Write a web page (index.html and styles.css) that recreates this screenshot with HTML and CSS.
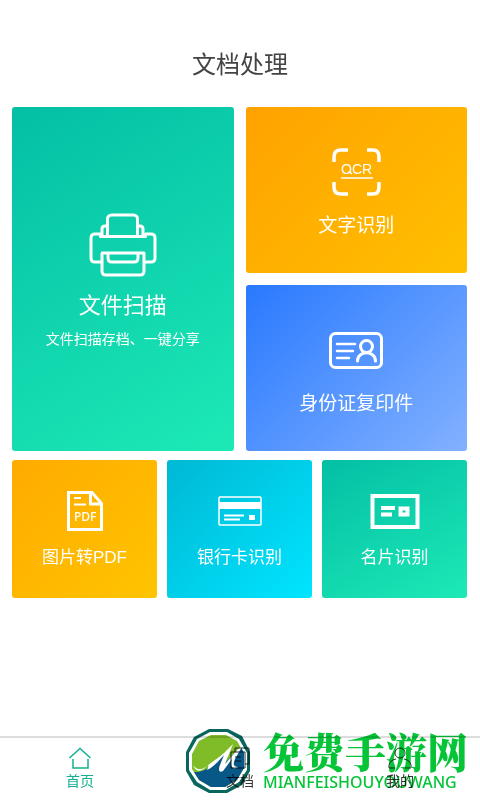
FILE: index.html
```html
<!DOCTYPE html>
<html lang="zh-CN">

<head>
    <meta charset="UTF-8" />
    <meta name="viewport" content="width=device-width, initial-scale=1.0" />
    <title>文档处理</title>
    <link rel="stylesheet" href="styles.css">
</head>

<body>
    <header class="header">
        <h1>文档处理</h1>
    </header>

    <main class="content">
        <div class="main-grid">
            <a href="#scan" class="card card-large green">
                <svg width="68" height="64" viewBox="0 0 68 64" fill="none" stroke="#fff" stroke-width="3" stroke-linejoin="round">
                    <path d="M18.500 23.500V6a4 4 0 0 1 4-4h22a4 4 0 0 1 4 4v17.500" />
                    <path d="M13 23.500V16q0-3 3-3h2M49 13h2q3 0 3 3v7.500" />
                    <path d="M12 49H6q-4 0-4-4V25q0-4 4-4h5.500v2.500h45V21H62q4 0 4 4v20q0 4-4 4h-6" />
                    <path d="M12 40h43v18q0 4-4 4H17q-4 0-4-4V40M19 41v4q0 4 4 4h22q4 0 4-4v-4" />
                </svg>
                <span class="card-title">文件扫描</span>
                <span class="card-desc">文件扫描存档、一键分享</span>
            </a>

            <a href="#ocr" class="card medium orange">
                <svg width="50" height="48" viewBox="0 0 50 48" fill="none" stroke="#fff" stroke-width="3.500">
                    <path d="M3 14V9q0-7 7-7h7M36 2h6q6 0 6 7v5M48 34v5q0 7-6 7h-6M17 46h-7q-7 0-7-7v-5" />
                    <path d="M10 30h32" stroke-width="1.500" />
                    <path d="M18 23l3 3" stroke-width="1.500" />
                    <text class="ocr-text" x="10" y="26">OCR</text>
                </svg>
                <span class="card-label">文字识别</span>
            </a>

            <a href="#idcard" class="card medium blue">
                <svg width="54" height="48" viewBox="0 -5 54 48" fill="none" stroke="#fff" stroke-width="3" stroke-linecap="round">
                    <rect x="1.500" y="2.500" width="51" height="34" rx="5" />
                    <path d="M8 13h18M8 20h16M8 27h12" stroke-width="2.500" />
                    <circle cx="37.500" cy="15.500" r="6" />
                    <path d="M28.500 30c0-11 18-11 18 0" />
                </svg>
                <span class="card-label">身份证复印件</span>
            </a>
        </div>

        <div class="sub-grid">
            <a href="#pdf" class="card small amber">
                <svg width="36" height="40" viewBox="0 0 36 40" fill="none" stroke="#fff" stroke-width="3">
                    <path d="M1.500 1.500H25l9.500 11V38.500h-33z" />
                    <path d="M23.500 2v11H34" />
                    <path d="M7 7h7M7 13.500h12" stroke-width="2" />
                    <text class="pdf-text" x="7" y="30">PDF</text>
                </svg>
                <span class="card-name">图片转PDF</span>
            </a>

            <a href="#bank" class="card small cyan">
                <svg width="44" height="40" viewBox="0 0 44 40" fill="none" stroke="#fff" stroke-width="1.500">
                    <rect x="1" y="6" width="42" height="28" rx="1" />
                    <path d="M1 14.500h42" stroke-width="7" />
                    <path d="M6 24.500h20M6 28.500h16" stroke-width="2" />
                    <path d="M31 26.500h6" stroke-width="5" />
                </svg>
                <span class="card-name">银行卡识别</span>
            </a>

            <a href="#namecard" class="card small green">
                <svg width="50" height="40" viewBox="0 0 50 40" fill="none" stroke="#fff" stroke-width="4">
                    <rect x="2.500" y="5" width="45" height="31" />
                    <path d="M11 17h14M11 23.500h11" />
                    <rect x="30.500" y="17.500" width="7" height="6" />
                </svg>
                <span class="card-name">名片识别</span>
            </a>
        </div>
    </main>

    <footer class="footer">
        <nav class="tabbar">
            <a href="#home" class="tab active">
                <svg width="24" height="24" viewBox="0 0 24 24" fill="none" stroke="currentColor" stroke-width="1.500">
                    <path d="M1.500 12 12 2.500 22.500 12M5 13v9h15v-9" />
                </svg>
                首页
            </a>
            <a href="#docs" class="tab">
                <svg width="24" height="24" viewBox="0 0 24 24" fill="none" stroke="currentColor" stroke-width="1">
                    <path d="M7 6V2h14v16h-4M3 6h14v16H3zM7 11h6M7 15h6" />
                </svg>
                文档
            </a>
            <a href="#mine" class="tab">
                <svg width="24" height="24" viewBox="0 0 24 24" fill="none" stroke="currentColor" stroke-width="1">
                    <circle cx="12" cy="7" r="5" />
                    <path d="M1 22v-3q1-5 7-6M23 22v-3q-1-5-7-6M1 22h6M17 22h6" />
                </svg>
                我的
            </a>
        </nav>

        <div class="brand">
            <svg width="66" height="66" viewBox="0 0 66 66">
                <path d="M24 1h19l14 7 8 16v19l-8 14-15 8H24L9 57 1 43V24L9 9z" fill="#08665c" />
                <path d="M25 4h17l12 7 8 14v17l-8 12-13 8H25L12 54 4 42V25l8-14z" fill="#fff" />
                <path d="M26 7h15l11 6 7 12v15l-7 12-12 7H26L14 52 7 41V26l7-13z" fill="#7fbc27" />
                <path d="M9 44c9 1 19-6 27-15l9-8-4 13 11-12 4-3 3 6v15l-7 12-12 7H26L14 52z" fill="#085887" />
                <path d="M8 37c5 7 10 4 14 1 6-5 13-9 17-13l9-9-8 20 13-15 5-4-8 14c-2 5-2 8 3 8-5 4-9-1-6-8l-9 12c-4 2-5-1-3-6l4-10c-8 9-12 13-17 15 1-2 2-4 1-5-5 6-12 9-15 0z" fill="#fff" />
            </svg>
            <div class="brand-text">
                <strong>免费手游网</strong>
                <span>MIANFEISHOUYOUWANG</span>
            </div>
        </div>
    </footer>
</body>

</html>
```

FILE: styles.css
```css
* {
    box-sizing: border-box;
}

body {
    margin: 0;
    min-height: 100vh;
    display: flex;
    flex-direction: column;
    background-color: #fff;
    color: #444;
    font-family: "Liberation Sans", "Noto Sans CJK SC", sans-serif;
}

a {
    color: inherit;
    text-decoration: none;
}

svg {
    display: block;
}

.header {
    padding: 47px 12px 24px;
    text-align: center;
}

.header h1 {
    margin: 0;
    font-size: 24px;
    font-weight: 400;
    line-height: 36px;
}

.content {
    padding: 0 13px 0 12px;
}

.main-grid {
    display: grid;
    grid-template-columns: 1fr 1fr;
    grid-auto-rows: minmax(166px, auto);
    gap: 12px;
}

.sub-grid {
    display: grid;
    grid-template-columns: repeat(3, 1fr);
    gap: 10px;
    margin-top: 9px;
}

/* cards */
.card {
    display: flex;
    flex-direction: column;
    align-items: center;
    justify-content: center;
    padding-top: 4px;
    border-radius: 3px;
    color: #fff;
    text-align: center;
}

.card-large {
    grid-row: span 2;
}

.medium {
    padding-top: 7px;
}

.small {
    min-height: 138px;
}

.green {
    background: linear-gradient(150deg, #03bfa5, #1de9b6);
}

.orange {
    background: linear-gradient(135deg, #ffa200, #ffc000);
}

.amber {
    background: linear-gradient(135deg, #ffab00, #ffc400);
}

.blue {
    background: linear-gradient(135deg, #2979ff, #82b1ff);
}

.cyan {
    background: linear-gradient(135deg, #00b8d4, #00e5ff);
}

.card-title {
    margin-top: 12px;
    font-size: 22px;
    line-height: 34px;
}

.card-desc {
    margin-top: 6px;
    font-size: 14px;
    line-height: 20px;
}

.card-label {
    margin-top: 16px;
    font-size: 19px;
    line-height: 28px;
}

.card-name {
    margin-top: 14px;
    font-size: 17px;
    line-height: 26px;
}

.ocr-text {
    fill: #fff;
    stroke: none;
    font-size: 14px;
}

.pdf-text {
    fill: #fff;
    stroke: none;
    font-family: "Noto Sans", sans-serif;
    font-size: 12px;
    font-weight: 500;
}

/* bottom bar */
.footer {
    position: relative;
    margin-top: auto;
}

.tabbar {
    display: flex;
    border-top: 2px solid #ddd;
}

.tab {
    flex: 1;
    display: flex;
    flex-direction: column;
    align-items: center;
    padding: 8px 0;
    color: #333;
    font-size: 14px;
    line-height: 22px;
}

.active {
    color: #13b08f;
}

.brand {
    position: absolute;
    right: 12px;
    bottom: 6px;
    display: flex;
    align-items: center;
    gap: 12px;
    color: #06c437;
    mix-blend-mode: multiply;
}

.brand-text {
    display: flex;
    flex-direction: column;
}

.brand-text strong {
    font-family: "Noto Serif CJK SC", "Noto Sans CJK SC", serif;
    font-size: 41px;
    font-weight: 900;
    line-height: 42px;
}

.brand-text span {
    font-family: "Noto Sans", sans-serif;
    font-size: 16px;
    font-weight: 500;
    line-height: 20px;
}
```
